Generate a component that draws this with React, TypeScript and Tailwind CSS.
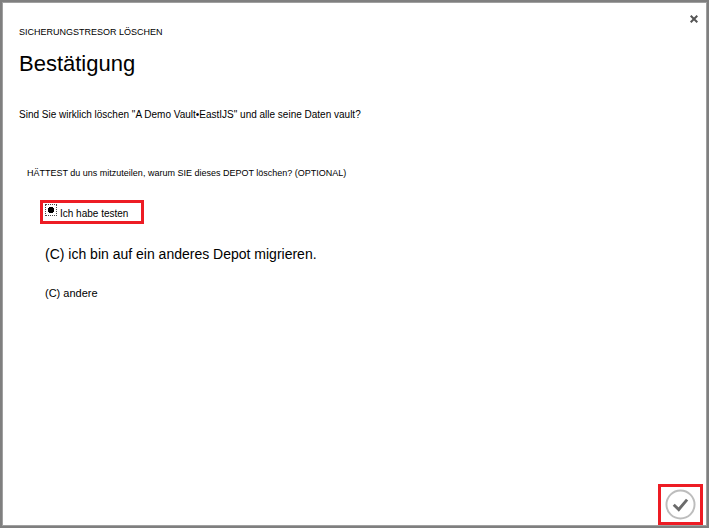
import { useState } from "react";

export default function App() {
  const [reason, setReason] = useState("test");

  return (
    <main
      className="flex min-h-screen flex-col border-2 border-[#7f7f7f] bg-white text-black"
      style={{ fontFamily: '"Liberation Sans", Arial, sans-serif' }}
    >
      <div className="flex grow flex-col border border-[#a0a0a0]">
        <header className="flex items-start justify-between pr-2">
          <div className="pt-[21px] pl-4">
            <p className="text-[9px] leading-4">SICHERUNGSTRESOR LÖSCHEN</p>
            <h1 className="mt-2 text-[22px] leading-8">Bestätigung</h1>
          </div>
          <button type="button" aria-label="Schließen" className="mt-3 flex size-2">
            <svg viewBox="0 0 8 8" className="size-2" fill="none" stroke="#555" strokeWidth="2">
              <path d="M0.7 0.7 7.3 7.3M7.3 0.7 0.7 7.3" />
            </svg>
          </button>
        </header>

        <p className="mt-[27px] pl-4 text-[10px] leading-4">
          Sind Sie wirklich löschen "A Demo Vault•EastIJS" und alle seine Daten vault?
        </p>

        <fieldset className="mt-10 flex flex-col items-start pl-6">
          <legend className="mb-[17px] py-0.5 text-[9px] leading-4">
            HÄTTEST du uns mitzuteilen, warum SIE dieses DEPOT löschen? (OPTIONAL)
          </legend>
          <label className="ml-[13px] flex h-6 w-26 items-center gap-[3px] border-3 border-[#ed1c24] pl-0.5 text-[10px] leading-4">
            <input
              type="radio"
              name="reason"
              checked={reason === "test"}
              onChange={() => setReason("test")}
              className="mb-1 size-3 shrink-0 appearance-none border border-dotted border-[#444] bg-white bg-[radial-gradient(circle,#000_0_3px,transparent_3px)]"
            />
            <span className="mt-1">Ich habe testen</span>
          </label>
          <label className="mt-5 ml-4 pl-0.5 text-[14px] leading-5">
            <input
              type="radio"
              name="reason"
              checked={reason === "migrate"}
              onChange={() => setReason("migrate")}
              className="sr-only"
            />
            (C) ich bin auf ein anderes Depot migrieren.
          </label>
          <label className="mt-5 ml-4 pl-0.5 text-[11px] leading-[18px]">
            <input
              type="radio"
              name="reason"
              checked={reason === "other"}
              onChange={() => setReason("other")}
              className="sr-only"
            />
            (C) andere
          </label>
        </fieldset>

        <footer className="mt-auto flex justify-end pr-[3px]">
          <div className="border-3 border-[#ed1c24] px-1 py-0.5">
            <button type="button" aria-label="Bestätigen" className="flex">
              <svg viewBox="0 0 32 32" className="size-[31px]" fill="none">
                <circle cx="16" cy="16" r="14.5" stroke="#bdbdbd" strokeWidth="2" />
                <path d="M9 16.2 14.2 21.2 22.8 11" stroke="#6b6b6b" strokeWidth="3" />
              </svg>
            </button>
          </div>
        </footer>
      </div>
    </main>
  );
}
